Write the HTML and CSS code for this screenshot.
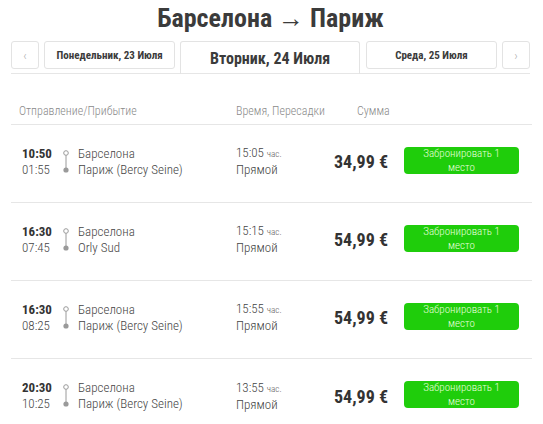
FILE: index.html
```html
<!DOCTYPE html>
<html lang="ru">
<head>
<meta charset="utf-8">
<link rel="stylesheet" href="styles.css">
</head>
<body>
<div class="page">
  <h1 class="title">Барселона → Париж</h1>
  <nav class="days">
    <div class="tab arrow">‹</div>
    <div class="tab day">Понедельник, 23 Июля</div>
    <div class="tab active">Вторник, 24 Июля</div>
    <div class="tab day">Среда, 25 Июля</div>
    <div class="tab arrow">›</div>
  </nav>
  <div class="head">
    <div class="c-route">Отправление/Прибытие</div>
    <div class="c-dur">Время, Пересадки</div>
    <div class="c-sum">Сумма</div>
  </div>
  <div class="row">
    <div class="times"><b>10:50</b><span>01:55</span></div>
    <svg class="line" width="8" height="24" viewBox="0 0 8 24"><circle cx="4" cy="3" r="2.3" fill="none" stroke="#9a9a9a" stroke-width="1"/><line x1="4" y1="5.3" x2="4" y2="19" stroke="#9a9a9a" stroke-width="1"/><circle cx="4" cy="20" r="2.6" fill="#9a9a9a"/></svg>
    <div class="cities"><span>Барселона</span><span>Париж (Bercy Seine)</span></div>
    <div class="dur"><span>15:05 <small>час.</small></span><span>Прямой</span></div>
    <div class="price">34,99 €</div>
    <button class="book">Забронировать 1 место</button>
  </div>
  <div class="row">
    <div class="times"><b>16:30</b><span>07:45</span></div>
    <svg class="line" width="8" height="24" viewBox="0 0 8 24"><circle cx="4" cy="3" r="2.3" fill="none" stroke="#9a9a9a" stroke-width="1"/><line x1="4" y1="5.3" x2="4" y2="19" stroke="#9a9a9a" stroke-width="1"/><circle cx="4" cy="20" r="2.6" fill="#9a9a9a"/></svg>
    <div class="cities"><span>Барселона</span><span>Orly Sud</span></div>
    <div class="dur"><span>15:15 <small>час.</small></span><span>Прямой</span></div>
    <div class="price">54,99 €</div>
    <button class="book">Забронировать 1 место</button>
  </div>
  <div class="row">
    <div class="times"><b>16:30</b><span>08:25</span></div>
    <svg class="line" width="8" height="24" viewBox="0 0 8 24"><circle cx="4" cy="3" r="2.3" fill="none" stroke="#9a9a9a" stroke-width="1"/><line x1="4" y1="5.3" x2="4" y2="19" stroke="#9a9a9a" stroke-width="1"/><circle cx="4" cy="20" r="2.6" fill="#9a9a9a"/></svg>
    <div class="cities"><span>Барселона</span><span>Париж (Bercy Seine)</span></div>
    <div class="dur"><span>15:55 <small>час.</small></span><span>Прямой</span></div>
    <div class="price">54,99 €</div>
    <button class="book">Забронировать 1 место</button>
  </div>
  <div class="row last">
    <div class="times"><b>20:30</b><span>10:25</span></div>
    <svg class="line" width="8" height="24" viewBox="0 0 8 24"><circle cx="4" cy="3" r="2.3" fill="none" stroke="#9a9a9a" stroke-width="1"/><line x1="4" y1="5.3" x2="4" y2="19" stroke="#9a9a9a" stroke-width="1"/><circle cx="4" cy="20" r="2.6" fill="#9a9a9a"/></svg>
    <div class="cities"><span>Барселона</span><span>Париж (Bercy Seine)</span></div>
    <div class="dur"><span>13:55 <small>час.</small></span><span>Прямой</span></div>
    <div class="price">54,99 €</div>
    <button class="book">Забронировать 1 место</button>
  </div>
</div>
</body>
</html>
```
FILE: styles.css
```css
* { box-sizing: border-box; }
body {
  margin: 0;
  background: #fff;
  font-family: Roboto, "Liberation Sans Narrow", sans-serif;
  font-stretch: 75%;
  font-weight: 300;
  color: #333;
}
.page {
  padding: 0 13px 0 11px;
}
.title {
  margin: 0;
  padding-top: 3px;
  height: 41px;
  text-align: center;
  font-size: 26px;
  font-weight: 700;
  color: #3b3b3b;
  line-height: 30px;
}
.days {
  display: flex;
  align-items: flex-start;
  border-bottom: 1px solid #e6e6e6;
  height: 33px;
}
.tab {
  height: 28px;
  border: 1px solid #e3e3e3;
  border-radius: 3px;
  display: flex;
  align-items: center;
  justify-content: center;
  font-weight: 700;
  font-size: 11px;
  color: #3b3b3b;
  margin-right: 5px;
}
.arrow {
  width: 28px;
  color: #aaa;
  font-weight: 300;
  font-size: 13px;
}
.arrow:last-child { margin-right: 0; }
.day { width: 132px; }
.active {
  width: 180px;
  height: 33px;
  border-bottom: none;
  border-radius: 3px 3px 0 0;
  font-size: 16px;
  margin-right: 6px;
}
.head {
  display: flex;
  align-items: center;
  height: 51px;
  padding-top: 23px;
  border-bottom: 1px solid #e6e6e6;
  font-size: 12px;
  color: #8a8a8a;
  margin-right: -2px;
}
.c-route { width: 225px; padding-left: 8px; }
.c-dur { width: 121px; }
.row {
  display: flex;
  align-items: center;
  height: 78px;
  padding-bottom: 4px;
  border-bottom: 1px solid #e6e6e6;
  margin-right: -2px;
  font-size: 13px;
}
.row.last { border-bottom: none; }
.times {
  display: flex;
  flex-direction: column;
  width: 50px;
  padding-left: 11px;
  line-height: 16px;
  color: #444;
}
.times b { color: #333; font-weight: 700; }
.line { margin: 0 8px 0 1px; }
.cities {
  display: flex;
  flex-direction: column;
  width: 158px;
  line-height: 16px;
  color: #444;
}
.dur {
  display: flex;
  flex-direction: column;
  width: 79px;
  line-height: 16px;
  color: #444;
}
.dur small { font-size: 9px; color: #555; }
.price {
  width: 73px;
  text-align: right;
  font-size: 18px;
  font-weight: 700;
  color: #333;
}
.book {
  margin-left: 16px;
  margin-bottom: 3px;
  width: 115px;
  height: 27px;
  border: none;
  border-radius: 4px;
  background: #1fcd0b;
  color: #e6ffdc;
  font-family: inherit;
  font-stretch: 75%;
  font-weight: 300;
  font-size: 11px;
  line-height: 14px;
  padding: 0 8px;
}
```
